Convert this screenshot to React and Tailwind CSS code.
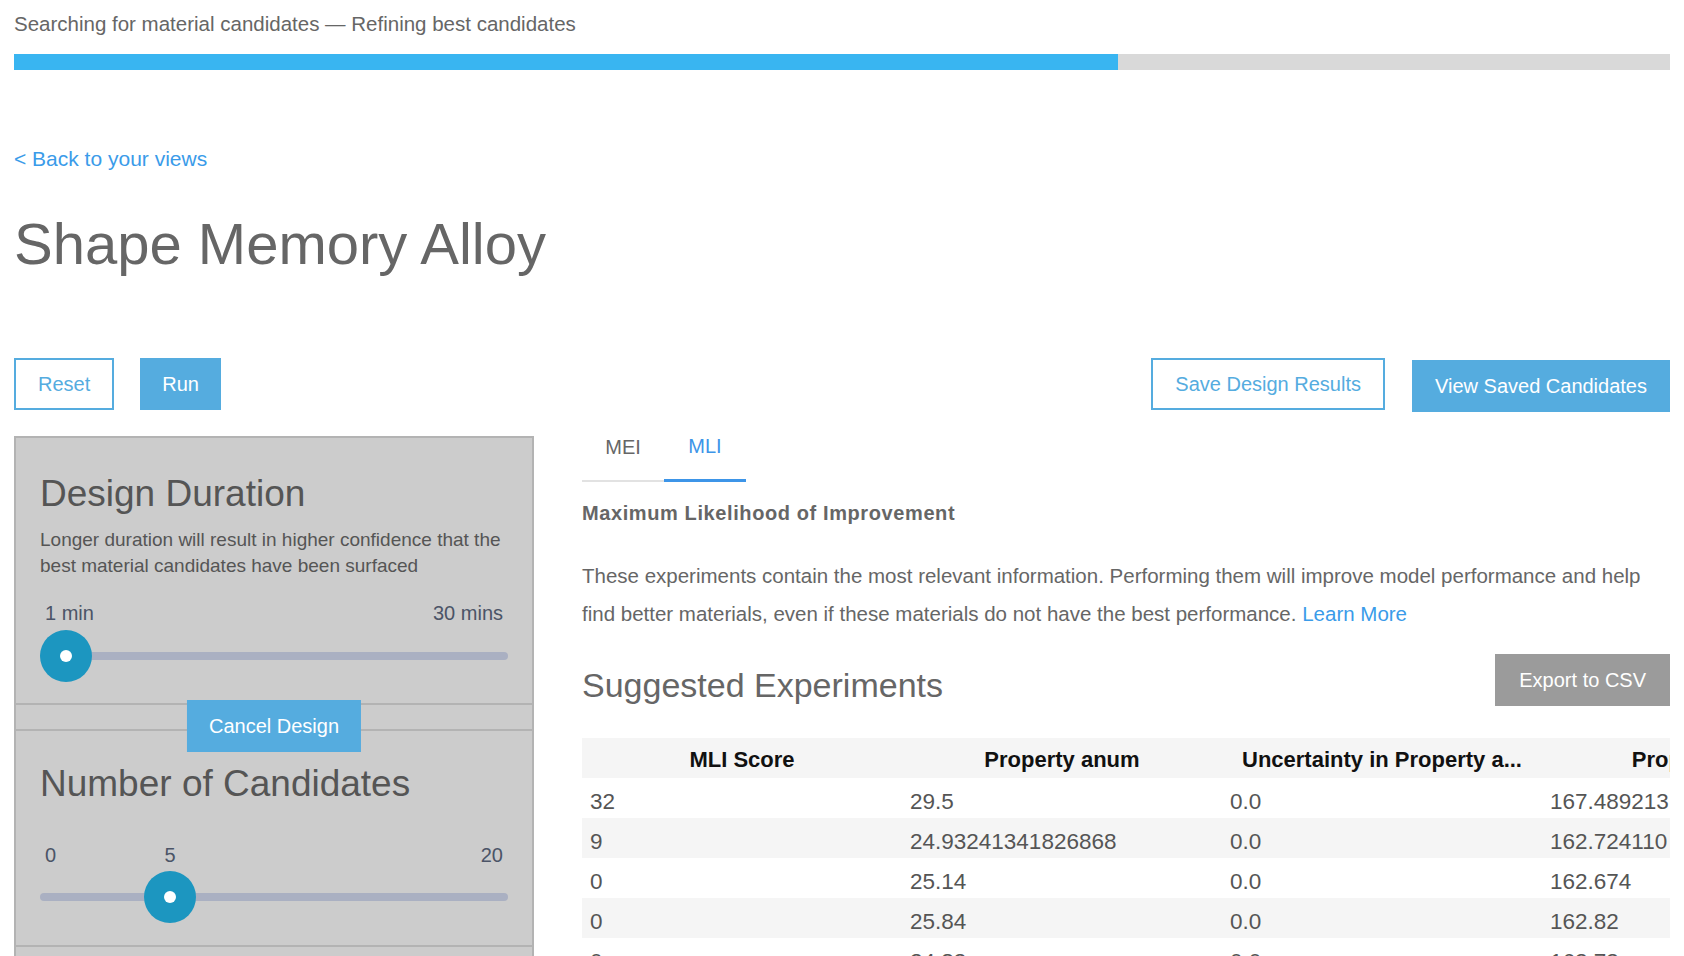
import React from "react";

const rows = [
  ["32", "29.5", "0.0", "167.489213", "3.1"],
  ["9", "24.93241341826868", "0.0", "162.724110", "3.1"],
  ["0", "25.14", "0.0", "162.674", "3.1"],
  ["0", "25.84", "0.0", "162.82", "3.1"],
  ["0", "24.83", "0.0", "162.73", "3.1"],
  ["0", "25.02", "0.0", "162.91", "3.1"],
];

function Slider({ thumbLeft }) {
  return (
    <div className="relative h-[52px]">
      <div className="absolute left-0 right-0 top-[22px] h-[8px] rounded-full bg-[#aab0c2]" />
      <div
        className="absolute top-0 flex h-[52px] w-[52px] items-center justify-center rounded-full bg-[#1c96c0]"
        style={{ left: thumbLeft }}
      >
        <div className="h-[12px] w-[12px] rounded-full bg-white" />
      </div>
    </div>
  );
}

export default function App() {
  return (
    <div className="min-h-screen bg-white px-[14px] font-['Liberation_Sans',Arial,sans-serif] text-[#666]">
      <div className="pt-[12px] text-[20.5px] leading-[24px] text-[#666]">
        Searching for material candidates — Refining best candidates
      </div>
      <div className="mt-[18px] flex h-[16px] bg-[#d9d9d9]">
        <div className="h-full w-[1104px] bg-[#39b5f1]" />
      </div>

      <div className="mt-[77px] text-[21px] leading-[24px] text-[#3a9be9]">
        &lt; Back to your views
      </div>

      <h1 className="mt-[37px] text-[58px] leading-[72px] text-[#666]">
        Shape Memory Alloy
      </h1>

      <div className="mt-[78px] flex items-start justify-between">
        <div className="flex gap-[26px]">
          <button className="h-[52px] border-2 border-[#55acdf] bg-white px-[22px] text-[20px] text-[#55acdf]">
            Reset
          </button>
          <button className="h-[52px] bg-[#55acdf] px-[22px] text-[20px] text-white">
            Run
          </button>
        </div>
        <div className="flex items-start gap-[27px]">
          <button className="h-[52px] border-2 border-[#55acdf] bg-white px-[22px] text-[20px] text-[#55acdf]">
            Save Design Results
          </button>
          <button className="mt-[2px] h-[52px] bg-[#55acdf] px-[23px] text-[20px] text-white">
            View Saved Candidates
          </button>
        </div>
      </div>

      <div className="mt-[24px] flex items-start gap-[48px]">
        {/* Left column */}
        <div className="w-[520px] shrink-0 border-x-2 border-t-2 border-[#b3b3b3] bg-[#cccccc] pb-[40px]">
          <div className="border-b-2 border-[#b3b3b3] px-[24px] pb-[21px] pt-[34px]">
            <div className="text-[37px] leading-[44px] text-[#555]">Design Duration</div>
            <p className="mt-[11px] text-[19px] leading-[26px] text-[#555]">
              Longer duration will result in higher confidence that the best material candidates have been surfaced
            </p>
            <div className="mt-[22px] flex justify-between px-[5px] text-[20px] leading-[24px] text-[#4b5467]">
              <span>1 min</span>
              <span>30 mins</span>
            </div>
            <div className="mt-[5px]">
              <Slider thumbLeft={0} />
            </div>
          </div>

          <div className="relative h-[24px]">
            <button className="absolute left-1/2 top-[-5px] z-10 h-[52px] -translate-x-1/2 bg-[#55acdf] px-[22px] text-[20px] whitespace-nowrap text-white">
              Cancel Design
            </button>
          </div>

          <div className="border-y-2 border-[#b3b3b3] px-[24px] pb-[22px] pt-[31px]">
            <div className="text-[37px] leading-[44px] text-[#555]">Number of Candidates</div>
            <div className="relative mt-[37px] h-[24px] text-[20px] leading-[24px] text-[#4b5467]">
              <span className="absolute left-[5px]">0</span>
              <span className="absolute left-[130px] -translate-x-1/2">5</span>
              <span className="absolute right-[5px]">20</span>
            </div>
            <div className="mt-[4px]">
              <Slider thumbLeft={104} />
            </div>
          </div>
        </div>

        {/* Right column */}
        <div className="min-w-0 flex-1">
          <div className="flex items-end">
            <div className="w-[82px] border-b-2 border-[#e2e2e2] pb-[23px] text-center text-[20px] leading-[20px] text-[#666]">
              MEI
            </div>
            <div className="w-[82px] border-b-[3px] border-[#3d95e8] pb-[23px] text-center text-[20px] leading-[20px] text-[#3d95e8]">
              MLI
            </div>
          </div>

          <div className="mt-[19px] text-[20px] font-bold leading-[24px] tracking-[0.6px] text-[#666]">
            Maximum Likelihood of Improvement
          </div>

          <p className="mt-[32px] text-[20.5px] leading-[38px] text-[#666]">
            These experiments contain the most relevant information. Performing them will improve model performance and help find better materials, even if these materials do not have the best performance.{" "}
            <span className="text-[#3a9be9]">Learn More</span>
          </p>

          <div className="mt-[21px] flex items-end justify-between">
            <div className="mb-[1px] text-[34px] leading-[40px] text-[#666]">Suggested Experiments</div>
            <button className="h-[52px] bg-[#9b9b9b] px-[24px] text-[20px] text-white">
              Export to CSV
            </button>
          </div>

          <div className="mt-[32px] overflow-hidden">
            <table className="w-[1600px] table-fixed border-collapse">
              <thead>
                <tr className="h-[40px] bg-[#f5f5f5]">
                  <th className="w-[320px] pt-[2px] text-center text-[22px] font-bold text-[#111]">MLI Score</th>
                  <th className="w-[320px] pt-[2px] text-center text-[22px] font-bold text-[#111]">Property anum</th>
                  <th className="w-[320px] pt-[2px] text-center text-[22px] font-bold text-[#111]">Uncertainty in Property a...</th>
                  <th className="w-[320px] pl-[16px] pt-[2px] text-center text-[22px] font-bold text-[#111]">Property bnum</th>
                  <th className="w-[320px] pt-[2px] text-center text-[22px] font-bold text-[#111]">Uncertainty in Property b...</th>
                </tr>
              </thead>
              <tbody>
                {rows.map((r, i) => (
                  <tr key={i} className={i % 2 === 0 ? "h-[40px] bg-white" : "h-[40px] bg-[#f5f5f5]"}>
                    {r.map((c, j) => (
                      <td key={j} className="pl-[8px] pt-[8px] text-left text-[22.5px] leading-[28px] text-[#555]">
                        {c}
                      </td>
                    ))}
                  </tr>
                ))}
              </tbody>
            </table>
          </div>
        </div>
      </div>
    </div>
  );
}
